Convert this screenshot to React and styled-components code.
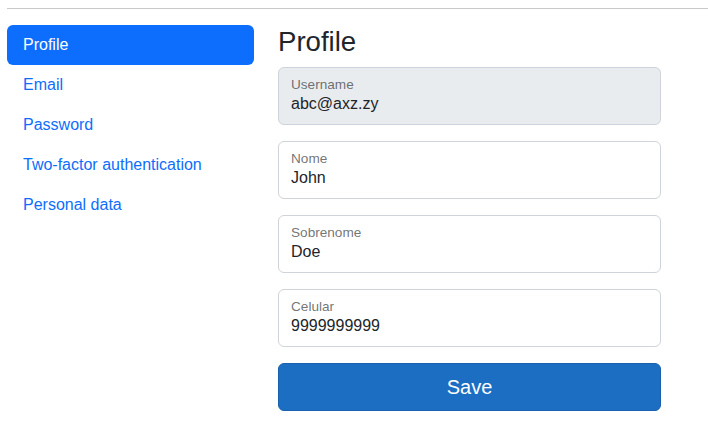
import React from "react";
import styled, { createGlobalStyle } from "styled-components";

const Global = createGlobalStyle`
  html, body { margin: 0; padding: 0; background: #fff; }
  body {
    font-family: "Liberation Sans", Arial, sans-serif;
    font-size: 16px;
    line-height: 1.5;
    color: #212529;
  }
  * { box-sizing: border-box; }
`;

const Page = styled.div`
  padding: 8px 0 0 7px;
`;

const Rule = styled.hr`
  margin: 0 0 16px 0;
  border: 0;
  border-top: 1px solid #c8c9ca;
  height: 0;
`;

const Row = styled.div`
  display: flex;
  align-items: flex-start;
  gap: 24px;
`;

const Nav = styled.nav`
  width: 247px;
  display: flex;
  flex-direction: column;
`;

const NavLink = styled.a`
  display: block;
  padding: 8px 16px;
  line-height: 24px;
  font-size: 16px;
  border-radius: 6px;
  text-decoration: none;
  color: ${(p) => (p.$active ? "#fff" : "#0d6efd")};
  background: ${(p) => (p.$active ? "#0d6efd" : "transparent")};
`;

const Main = styled.main`
  width: 383px;
  display: flex;
  flex-direction: column;
`;

const Title = styled.h2`
  margin: 0 0 8px 0;
  font-size: 27.6px;
  line-height: 34px;
  font-weight: 500;
  color: #212529;
`;

const Form = styled.form`
  display: flex;
  flex-direction: column;
  gap: 16px;
`;

const Field = styled.div`
  height: 58px;
  border: 1px solid #ced4da;
  border-radius: 6px;
  background: ${(p) => (p.$disabled ? "#e9ecef" : "#fff")};
  padding: 10px 12px 8px 12px;
  display: flex;
  flex-direction: column;
`;

const Label = styled.label`
  font-size: 13.6px;
  line-height: 14px;
  color: rgba(33, 37, 41, 0.65);
`;

const Value = styled.div`
  font-size: 16px;
  line-height: 24px;
  color: #212529;
`;

const SaveButton = styled.button`
  height: 48px;
  width: 100%;
  border: 1px solid #1861ac;
  border-radius: 6px;
  background: #1b6ec2;
  color: #fff;
  font-family: "Liberation Sans", Arial, sans-serif;
  font-size: 20px;
  line-height: 30px;
  padding: 8px 16px;
  cursor: pointer;
`;

const navItems = ["Profile", "Email", "Password", "Two-factor authentication", "Personal data"];

const fields = [
  { label: "Username", value: "abc@axz.zy", disabled: true },
  { label: "Nome", value: "John" },
  { label: "Sobrenome", value: "Doe" },
  { label: "Celular", value: "9999999999" },
];

export default function App() {
  return (
    <>
      <Global />
      <Page>
        <Rule />
        <Row>
          <Nav>
            {navItems.map((n, i) => (
              <NavLink key={n} href="#" $active={i === 0}>
                {n}
              </NavLink>
            ))}
          </Nav>
          <Main>
            <Title>Profile</Title>
            <Form onSubmit={(e) => e.preventDefault()}>
              {fields.map((f) => (
                <Field key={f.label} $disabled={f.disabled}>
                  <Label>{f.label}</Label>
                  <Value>{f.value}</Value>
                </Field>
              ))}
              <SaveButton type="submit">Save</SaveButton>
            </Form>
          </Main>
        </Row>
      </Page>
    </>
  );
}
